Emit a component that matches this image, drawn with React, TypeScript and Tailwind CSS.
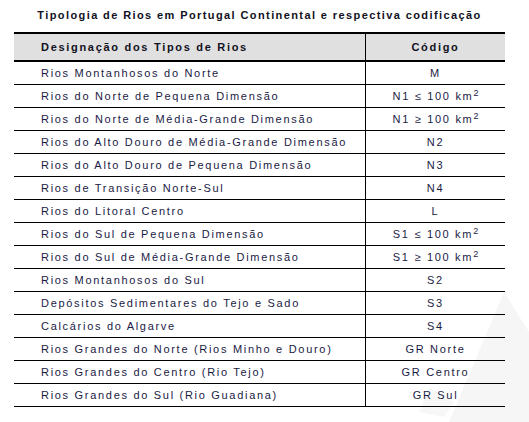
import React from "react";

const Sup = () => (
  <span className="text-[9px] relative -top-[4px] tracking-normal">2</span>
);

const rows: { name: string; code: React.ReactNode }[] = [
  { name: "Rios Montanhosos do Norte", code: "M" },
  { name: "Rios do Norte de Pequena Dimensão", code: <>N1 ≤ 100 km<Sup /></> },
  { name: "Rios do Norte de Média-Grande Dimensão", code: <>N1 ≥ 100 km<Sup /></> },
  { name: "Rios do Alto Douro de Média-Grande Dimensão", code: "N2" },
  { name: "Rios do Alto Douro de Pequena Dimensão", code: "N3" },
  { name: "Rios de Transição Norte-Sul", code: "N4" },
  { name: "Rios do Litoral Centro", code: "L" },
  { name: "Rios do Sul de Pequena Dimensão", code: <>S1 ≤ 100 km<Sup /></> },
  { name: "Rios do Sul de Média-Grande Dimensão", code: <>S1 ≥ 100 km<Sup /></> },
  { name: "Rios Montanhosos do Sul", code: "S2" },
  { name: "Depósitos Sedimentares do Tejo e Sado", code: "S3" },
  { name: "Calcários do Algarve", code: "S4" },
  { name: "Rios Grandes do Norte (Rios Minho e Douro)", code: "GR Norte" },
  { name: "Rios Grandes do Centro (Rio Tejo)", code: "GR Centro" },
  { name: "Rios Grandes do Sul (Rio Guadiana)", code: "GR Sul" },
];

export default function App() {
  return (
    <div
      className="relative w-[529px] h-[422px] bg-white overflow-hidden"
      style={{ fontFamily: '"Liberation Sans", Arial, sans-serif' }}
    >
      <svg className="absolute right-0 bottom-0" width="120" height="130" viewBox="0 0 120 130">
        <polygon points="95,0 120,40 120,130 40,130" fill="#f6f6f6" />
        <polygon points="20,95 45,110 35,125 10,120" fill="#f7f7f7" />
      </svg>
      <div className="relative pl-[14px] pt-[8px] w-[505px]">
        <div className="h-[24px] text-center text-[11px] font-bold tracking-[1.4px] text-[#111122] leading-[14px]">
          Tipologia de Rios em Portugal Continental e respectiva codificação
        </div>
        <div className="w-[491px] border-t-[2px] border-black text-[11px] tracking-[1.7px] text-[#1a1a44]">
          <div className="flex h-[28px] bg-[#e0e0e0] border-b-[2px] border-black font-bold text-[#111122]">
            <div className="w-[352px] border-r border-black flex items-center pl-[27px]">Designação dos Tipos de Rios</div>
            <div className="flex-1 flex items-center justify-center">Código</div>
          </div>
          {rows.map((r, i) => (
            <div key={i} className="flex h-[23px] border-b border-black">
              <div className="w-[352px] border-r border-black flex items-center pl-[27px]">{r.name}</div>
              <div className="flex-1 flex items-center justify-center">
                <span className="leading-none">{r.code}</span>
              </div>
            </div>
          ))}
        </div>
      </div>
    </div>
  );
}
